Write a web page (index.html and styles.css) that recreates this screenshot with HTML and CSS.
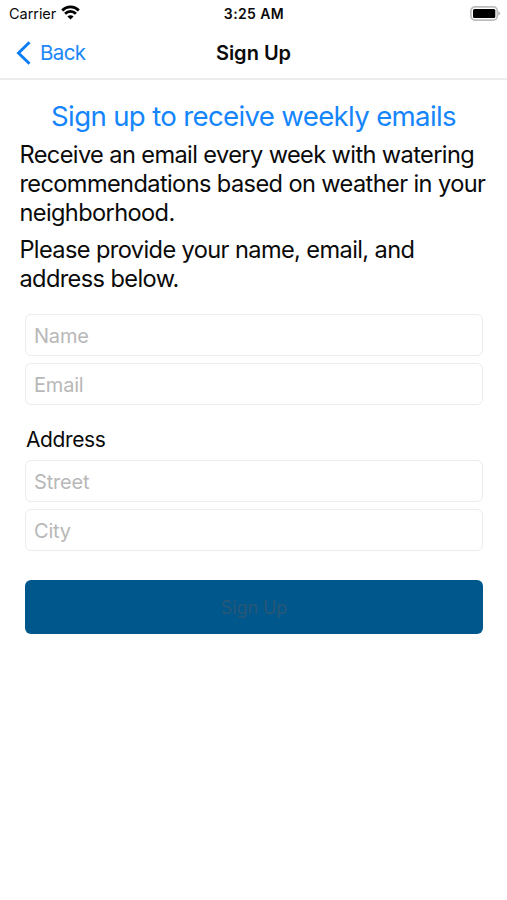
FILE: index.html
```html
<!DOCTYPE html>
<html lang="en">
<head>
<meta charset="utf-8">
<title>Sign Up</title>
<link rel="stylesheet" href="styles.css">
</head>
<body>
<header>
  <div class="status">
    <div class="carrier"><span class="t-carrier">Carrier</span>
      <svg width="19" height="15" viewBox="0 0 19 15" fill="none" stroke="#000" stroke-width="2.8"><path d="M1.200 5.400C5.800.8 13.200.8 17.800 5.400M4.100 8.700c3-3 7.800-3 10.800 0"/><path d="M9.500 14.400 6.400 11.400c1.700-1.700 4.500-1.700 6.200 0z" fill="#000" stroke="none"/></svg>
    </div>
    <span class="clock">3:25 AM</span>
    <svg class="battery" width="31" height="15" viewBox="0 0 31 15"><rect x=".9" y=".9" width="26.400" height="13.200" rx="4" fill="none" stroke="#bdbdbd" stroke-width="1.700"/><rect x="3" y="3" width="22.300" height="9" rx="1.500"/><path d="M28.300 5.300q3.800 2.200 0 4.400z" fill="#b5b5b5"/></svg>
  </div>
  <nav>
    <a class="back"><svg width="15" height="24" viewBox="0 0 15 24" fill="none" stroke="#0a7cf5" stroke-width="2.900" stroke-linecap="butt" stroke-linejoin="miter"><path d="M13.500 1.200 2.500 12l11 10.800"/></svg><span class="t-back">Back</span></a>
    <h1>Sign Up</h1>
  </nav>
</header>
<main>
  <h2>Sign up to receive weekly emails</h2>
  <p>Receive an email every week with watering<br>recommendations based on weather in your<br>neighborhood.</p>
  <p>Please provide your name, email, and<br>address below.</p>
  <form>
    <input type="text" placeholder="Name">
    <input type="text" placeholder="Email">
    <label>Address</label>
    <input type="text" placeholder="Street">
    <input type="text" placeholder="City">
    <button type="button" disabled>Sign Up</button>
  </form>
</main>
</body>
</html>
```
FILE: styles.css
```css
* { box-sizing: border-box; }
body { margin: 0; background: #fff; color: #0a0a0a; font-family: Inter, "Liberation Sans", sans-serif; }
header { height: 80px; border-bottom: 2px solid #ececec; }
.status { height: 27px; display: grid; grid-template-columns: 1fr auto 1fr; align-items: center; padding: 0 6px 0 9px; font-size: 14.5px; }
.carrier { display: flex; align-items: center; gap: 5px; }
.carrier svg { margin-top: -2px; }
.t-carrier { letter-spacing: -.05px; }
.clock { font-weight: 600; font-size: 14px; letter-spacing: .4px; margin-right: 2px; }
.battery { justify-self: end; margin-top: -1px; }
nav { height: 51px; display: grid; grid-template-columns: 1fr auto 1fr; align-items: center; padding: 0 16px; }
.back { display: flex; align-items: center; gap: 9px; color: #1c87f8; font-size: 20.5px; letter-spacing: -.6px; }
h1 { margin: 0; font-size: 20px; font-weight: 600; grid-column: 2; letter-spacing: 0; }
main { padding: 18px 18px 0 20px; }
h2 { margin: 0 2px 6px 0; height: 36px; line-height: 36px; font-size: 27.6px; font-weight: 400; text-align: center; color: #1485fb; letter-spacing: -.66px; white-space: nowrap; }
p { margin: 0 0 8px -.6px; font-size: 23.6px; line-height: 29px; letter-spacing: -.61px; white-space: nowrap; }
form { display: flex; flex-direction: column; gap: 7px; padding: 13px 6px 0 5px; }
input { width: 100%; height: 42px; border: 1px solid #ececec; border-radius: 6px; padding: 2px 8px 0; font: 400 20px Inter, "Liberation Sans", sans-serif; letter-spacing: -.2px; outline: 0; background: #fff; }
input::placeholder { color: #b8b8b8; opacity: 1; }
label { font-size: 21px; line-height: 26px; margin-top: 15px; padding-left: 1px; letter-spacing: -.4px; }
button { height: 54px; margin-top: 22px; border: 0; border-radius: 6px; background: #00578b; color: #285779; font: 400 18px Inter, "Liberation Sans", sans-serif; letter-spacing: -.1px; }
```
